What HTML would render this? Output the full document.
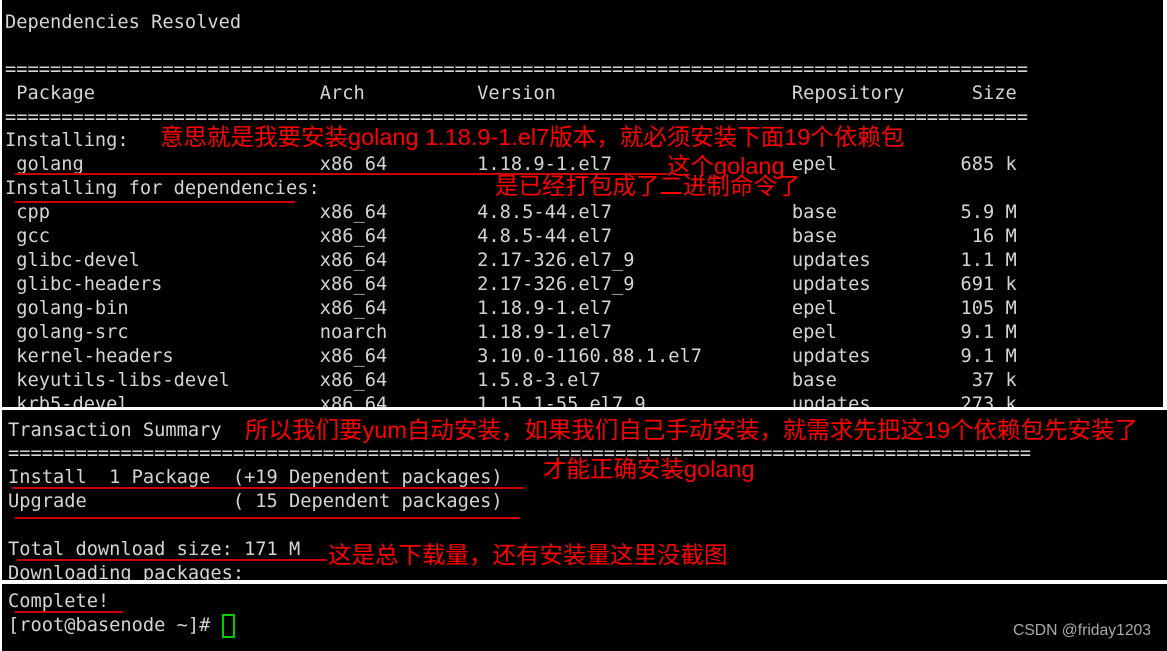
<!DOCTYPE html>
<html><head><meta charset="utf-8"><style>
html,body{margin:0;padding:0;background:#fff;width:1167px;height:651px;overflow:hidden;position:relative}
.p{position:absolute;background:#000;overflow:hidden}
.t{position:absolute;white-space:pre;font-family:"DejaVu Sans Mono","Liberation Mono",monospace;font-size:18.68px;line-height:24px;color:#d4d4d4;left:0}
.r{position:absolute;white-space:pre;font-family:"Liberation Sans","Noto Sans CJK SC",sans-serif;font-size:23.5px;line-height:28px;color:#f00}
.u{position:absolute;height:2px;background:#c00}
</style></head><body>
<div class="p" style="left:2px;top:0;width:1161px;height:407px">
<div class="t" style="left:3px;top:11px">Dependencies Resolved</div>
<div class="t" style="left:3px;top:58px">===========================================================================================</div>
<div class="t" style="left:3px;top:82px"> Package                    Arch          Version                     Repository      Size</div>
<div class="t" style="left:3px;top:106px">===========================================================================================</div>
<div class="t" style="left:3px;top:129px">Installing:</div>
<div class="t" style="left:3px;top:153px"> golang                     x86 64        1.18.9-1.el7                epel           685 k</div>
<div class="t" style="left:3px;top:177px">Installing for dependencies:</div>
<div class="t" style="left:3px;top:201px"> cpp                        x86_64        4.8.5-44.el7                base           5.9 M
 gcc                        x86_64        4.8.5-44.el7                base            16 M
 glibc-devel                x86_64        2.17-326.el7_9              updates        1.1 M
 glibc-headers              x86_64        2.17-326.el7_9              updates        691 k
 golang-bin                 x86_64        1.18.9-1.el7                epel           105 M
 golang-src                 noarch        1.18.9-1.el7                epel           9.1 M
 kernel-headers             x86_64        3.10.0-1160.88.1.el7        updates        9.1 M
 keyutils-libs-devel        x86_64        1.5.8-3.el7                 base            37 k
 krb5-devel                 x86_64        1.15.1-55.el7_9             updates        273 k</div>
<div class="r" style="left:158px;top:123px">意思就是我要安装golang 1.18.9-1.el7版本，就必须安装下面19个依赖包</div>
<div class="u" style="left:13px;top:173px;width:652px"></div>
<div class="r" style="left:665px;top:152px">这个golang</div>
<div class="r" style="left:493px;top:172px">是已经打包成了二进制命令了</div>
<div class="u" style="left:13px;top:201px;width:280px"></div>
</div>
<div class="p" style="left:2px;top:410px;width:1165px;height:170px">
<div class="t" style="left:6px;top:9px">Transaction Summary</div>
<div class="t" style="left:6px;top:32px">===========================================================================================</div>
<div class="t" style="left:6px;top:56px">Install  1 Package  (+19 Dependent packages)
Upgrade             ( 15 Dependent packages)

Total download size: 171 M
Downloading packages:</div>
<div class="r" style="left:243px;top:6px">所以我们要yum自动安装，如果我们自己手动安装，就需求先把这19个依赖包先安装了</div>
<div class="r" style="left:541px;top:45px">才能正确安装golang</div>
<div class="r" style="left:326px;top:131px">这是总下载量，还有安装量这里没截图</div>
<div class="u" style="left:10px;top:77px;width:512px"></div>
<div class="u" style="left:13px;top:107px;width:505px"></div>
<div class="u" style="left:15px;top:149px;width:310px"></div>
</div>
<div class="p" style="left:2px;top:584px;width:1165px;height:67px">
<div class="t" style="left:6px;top:6px">Complete!
[root@basenode ~]#</div>
<div style="position:absolute;left:220px;top:30px;width:9px;height:20px;border:2px solid #0c0"></div>
<div class="u" style="left:13px;top:27px;width:108px"></div>
<div style="position:absolute;left:1011px;top:38px;font-family:'Liberation Sans',sans-serif;font-size:15.7px;color:#aaa">CSDN @friday1203</div>
</div>
</body></html>
